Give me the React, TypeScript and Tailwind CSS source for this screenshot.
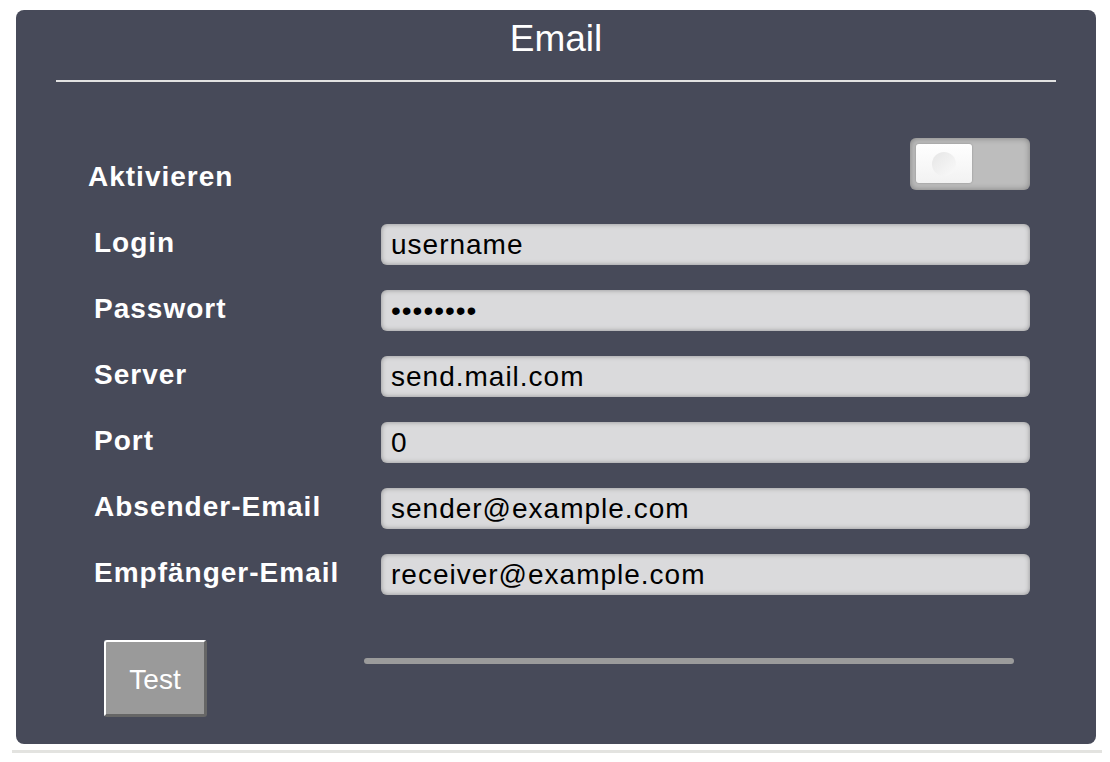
const fields = [
  { label: "Login", value: "username" },
  { label: "Passwort", value: "••••••••" },
  { label: "Server", value: "send.mail.com" },
  { label: "Port", value: "0" },
  { label: "Absender-Email", value: "sender@example.com" },
  { label: "Empfänger-Email", value: "receiver@example.com" },
];

const App = () => {
  return (
    <div className="w-[1110px] h-[762px] bg-white font-['Liberation_Sans',Arial,sans-serif] pt-[10px] pl-[12px] pr-[8px]">
      <div className="ml-[4px] mr-[6px] h-[734px] rounded-[8px] bg-[#474a59] pt-[16px]">
        <h1 className="text-center text-white text-[37px] leading-[26px] font-light">
          Email
        </h1>
        <div className="mx-[40px] mt-[28px] h-[2px] bg-[#e2e2e2]" />

        <div className="mt-[56px] pl-[72px] pr-[66px]">
          <div className="flex items-start justify-between h-[52px]">
            <span className="mt-[23px] text-white font-bold text-[28px] tracking-[1px] leading-[32px]">
              Aktivieren
            </span>
            <div className="w-[120px] h-[52px] rounded-[6px] bg-[#bdbdbd] shadow-[inset_0_0_6px_rgba(0,0,0,0.35)] pt-[6px] pl-[6px]">
              <div className="w-[56px] h-[39px] rounded-[3px] bg-gradient-to-b from-white to-[#f2f2f2] flex items-center justify-center shadow-[0_0_2px_rgba(0,0,0,0.3)]">
                <div className="w-[24px] h-[24px] rounded-full bg-gradient-to-br from-[#e6e6e6] to-[#fafafa]" />
              </div>
            </div>
          </div>

          <div className="mt-[34px] flex flex-col gap-[25px]">
            {fields.map((f) => (
              <div key={f.label} className="flex items-center">
                <span className="w-[293px] pl-[6px] -mt-[4px] text-white font-bold text-[28px] tracking-[1px] leading-[32px]">
                  {f.label}
                </span>
                <div className="flex-1 h-[41px] rounded-[6px] bg-[#dadadc] shadow-[inset_0_0_5px_rgba(0,0,0,0.35)] flex items-center px-[10px] text-black text-[28px] tracking-[1px]">
                  {f.value}
                </div>
              </div>
            ))}
          </div>

          <div className="mt-[45px] flex items-start">
            <button className="ml-[16px] w-[103px] h-[77px] pt-[4px] bg-[#9a9a9a] text-white text-[28px] rounded-[3px] border-t-[2px] border-l-[2px] border-b-[3px] border-r-[3px] border-t-white border-l-white border-b-[#666] border-r-[#666]">
              Test
            </button>
            <div className="ml-[157px] mt-[18px] w-[650px] h-[6px] rounded-full bg-[#9b9b9b]" />
          </div>
        </div>
      </div>
      <div className="mt-[6px] h-[3px] bg-[#e3e3e0]" />
    </div>
  );
};

export default App;
